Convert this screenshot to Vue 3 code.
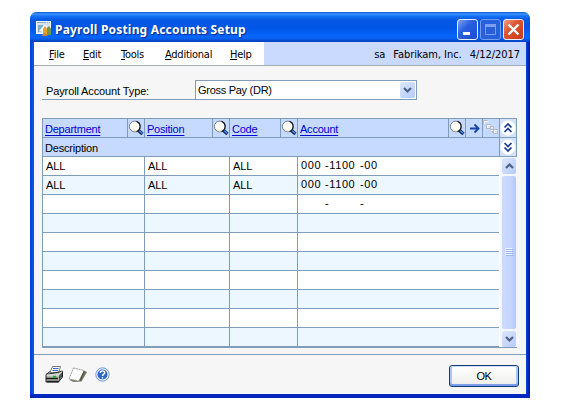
<script setup>
const menus = [
  { name: 'File', width: 34 },
  { name: 'Edit', width: 38 },
  { name: 'Tools', width: 44 },
  { name: 'Additional', width: 65 },
  { name: 'Help', width: 30 },
]
const columns = ['Department', 'Position', 'Code', 'Account']
const rows = [
  ['ALL', 'ALL', 'ALL', ['000', '-1100', '-00']],
  ['ALL', 'ALL', 'ALL', ['000', '-1100', '-00']],
  ['', '', '', ['', '-', '-']],
  ...Array.from({ length: 7 }, () => ['', '', '', []]),
]
</script>

<template>
  <div class="desktop">
    <div class="window">
      <header class="titlebar">
        <svg class="app-icon" width="16" height="16" viewBox="0 0 16 16">
          <rect x=".5" y=".5" width="14" height="12" fill="#d4e4ef" stroke="#f4faff" />
          <path d="M1 1.500h13" stroke="#8fa9bb" stroke-dasharray="9 1 1 1" />
          <path d="M2 4h5v7H2z" fill="#7faec8" />
          <path d="M3 10l5-6 3 1-4 6z" fill="#f6fae9" />
          <path d="M7 14V8l2-3 2 3v6z" fill="#e0a52e" />
          <path d="M11 14V7l2-2 2 3v6z" fill="#6d9653" />
          <path d="M5 15l4-3 3 3z" fill="#bc8542" />
        </svg>
        <h1>Payroll Posting Accounts Setup</h1>
        <div class="controls">
          <button class="ctl min"><svg width="19" height="19"><path d="M5 13.500h7" stroke="#fff" stroke-width="3" /></svg></button>
          <button class="ctl max"><svg width="19" height="19"><path d="M4.500 5v9.500h10V5z" fill="none" stroke="#7c9df0" /><path d="M4 5.500h11" stroke="#7c9df0" stroke-width="3" /></svg></button>
          <button class="ctl close"><svg width="19" height="19"><path d="M4.500 4.500l10 10M14.500 4.500l-10 10" stroke="#fff" stroke-width="2.300" /></svg></button>
        </div>
      </header>

      <nav class="menubar">
        <div class="menus">
          <span v-for="m in menus" :key="m.name" class="menu" :style="{ width: m.width + 'px' }"><u>{{ m.name[0] }}</u>{{ m.name.slice(1) }}</span>
        </div>
        <div class="session">
          <span>sa</span><span class="company">Fabrikam, Inc.</span><span>4/12/2017</span>
        </div>
      </nav>

      <main class="body">
        <div class="field">
          <label>Payroll Account Type:</label>
          <div class="select">
            <span>Gross Pay (DR)</span>
            <i class="drop"><svg width="15" height="16"><path d="M4 6l3.500 3.500L11 6" fill="none" stroke="#4d6185" stroke-width="2.200" /></svg></i>
          </div>
        </div>

        <section class="grid">
          <div class="head">
            <template v-for="c in columns" :key="c">
              <div class="cell link"><a>{{ c }}</a></div>
              <div class="cell icon">
                <svg width="16" height="18" viewBox="0 0 16 18">
                  <path d="M10.500 11.500l4 3.500" stroke="#10285c" stroke-width="3.400" />
                  <path d="M11 11.500l3.500 3" stroke="#4a8de8" stroke-width="1.400" />
                  <circle cx="6.800" cy="7.500" r="5.400" fill="#fffef6" stroke="#767a86" stroke-width="1" />
                  <path d="M8.500 2.400a5.400 5.400 0 0 1 0 10.200" stroke="#14161f" stroke-width="1.200" fill="none" />
                  <path d="M3 9.500a4.500 4.500 0 0 0 6 2" stroke="#e3dcc4" fill="none" />
                </svg>
              </div>
            </template>
            <div class="cell icon"><svg width="16" height="18"><path d="M4 9.500h8M8.500 5.500l4 4-4 4" fill="none" stroke="#1746b0" stroke-width="1.900" /></svg></div>
            <div class="cell icon">
              <svg width="16" height="18" fill="#dfe6f3" stroke="#b3b9c5">
                <path d="M.5 5.500v-4h4M3.500 10V7.500M9.500 14v-3" fill="none" />
                <path d="M3.500 5.500h4v4h-4zM7.500 7.500h3v3h-3zM10.500 10.500h4v4h-4z" />
                <path d="M1.500 5V2.500h4M4.500 9V6.500h3M11.500 13.500v-2h3M8 11.500h2" fill="none" stroke="#fff" />
              </svg>
            </div>
            <div class="cell icon"><svg class="chev" width="16" height="18"><circle cx="8" cy="9" r="7.500" fill="#fff" /><path d="M4.500 8.500L8 5l3.500 3.500M4.500 13L8 9.500l3.500 3.500" fill="none" stroke="#173a92" stroke-width="1.700" /></svg></div>
          </div>
          <div class="subhead">
            <div class="desc">Description</div>
            <div class="cell icon"><svg class="chev" width="16" height="18"><circle cx="8" cy="9" r="7.500" fill="#fff" /><path d="M4.500 5L8 8.500 11.500 5M4.500 9.500L8 13l3.500-3.500" fill="none" stroke="#173a92" stroke-width="1.700" /></svg></div>
          </div>
          <div class="data">
            <div class="rows">
              <div v-for="(r, i) in rows" :key="i" class="row">
                <div class="td">{{ r[0] }}</div>
                <div class="td">{{ r[1] }}</div>
                <div class="td">{{ r[2] }}</div>
                <div class="td account"><span v-for="(s, j) in r[3]" :key="j">{{ s }}</span></div>
              </div>
            </div>
            <div class="scroll">
              <i class="sbtn"><svg width="15" height="16"><path d="M4 10l3.500-3.500L11 10" fill="none" stroke="#4d6185" stroke-width="2.200" /></svg></i>
              <i class="thumb"><svg width="8" height="9"><path d="M0 .5h7M0 2.500h7M0 4.500h7M0 6.500h7" stroke="#eff5ff" /><path d="M1 1.500h7M1 3.500h7M1 5.500h7M1 7.500h7" stroke="#9eb9ef" /></svg></i>
              <i class="sbtn"><svg width="15" height="16"><path d="M4 6l3.500 3.500L11 6" fill="none" stroke="#4d6185" stroke-width="2.200" /></svg></i>
            </div>
          </div>
        </section>
      </main>

      <footer class="footer">
        <div class="tools">
          <svg width="19" height="17" viewBox="0 0 19 17">
            <path d="M5 6.500L7.500.5h8L13.500 7z" fill="#fff" stroke="#555" stroke-width=".8" />
            <path d="M8 2.500h5.500M7.500 4.500h5.500" stroke="#3569c4" stroke-width="1.200" />
            <path d="M1 8.500l4-3M14 6l3.500-1v6l-4 5H1V8.500z" fill="#b4b8b1" stroke="#222" />
            <path d="M1.500 9h12l3.500-3.500" stroke="#f5f5f5" fill="none" />
            <path d="M14 9.500l3-3v4l-3 4z" fill="#4b5150" />
            <path d="M1 12.500h12M2 15.500h12" stroke="#171717" stroke-width="1.500" />
            <path d="M8 10.700h3" stroke="#13b62c" stroke-width="2" />
          </svg>
          <svg width="20" height="16" viewBox="0 0 20 16">
            <path d="M15.500 3.500l3.500 1.500-5.500 9.500-8 .5-4-2z" fill="#77776a" />
            <path d="M5.500 1L16 3.500 11 14 1 12z" fill="#fff" stroke="#929289" stroke-width=".9" stroke-dasharray="2 .7" />
            <path d="M16.500 4.500L12 13.500" stroke="#555548" stroke-width="1.500" />
          </svg>
          <svg class="help" width="15" height="15" viewBox="0 0 15 15">
            <circle cx="7.500" cy="7.500" r="6.700" fill="#eef4ff" stroke="#6c9bdf" />
            <circle cx="7.500" cy="7.500" r="5" fill="#2f67c7" />
            <path d="M5.300 6c0-3 4.500-2.700 4.400-.2C9.600 7.300 7.600 7 7.500 9M7.500 10v1.500" fill="none" stroke="#fff" stroke-width="1.400" />
          </svg>
        </div>
        <button class="ok">OK</button>
      </footer>
    </div>
  </div>
</template>

<style>
body { background: #fff; overflow: hidden; }
</style>

<style scoped>
* { box-sizing: border-box; }
svg { display: block; flex: none; }
button { padding: 0; font: inherit; }
.desktop { width: 565px; height: 415px; padding: 12px 0 0 30px; font: 11px/14px "Liberation Sans", sans-serif; color: #000; }
.window { width: 500px; height: 386px; display: flex; flex-direction: column; background: linear-gradient(90deg, #0831d9 0, #0c4fe5 2px, #0855dd 4px, #0855dd 496px, #0030d8 497px, #00189c 500px); border-bottom: 4px solid #0428bd; border-radius: 7px 7px 0 0; overflow: hidden; }
.titlebar { height: 30px; flex: none; display: flex; align-items: center; padding: 0 6px; background: linear-gradient(#0a58cf 0, #3d95ff 2px, #1572f5 4px, #0558e2 8px, #0055e5 15px, #0663fb 23px, #0664fa 26px, #0453d8 28px, #003cb5 30px); }
.app-icon { margin-top: 3px; }
h1 { margin: 5px 0 0 3px; font: bold 12px/18px "Noto Sans", sans-serif; letter-spacing: .19px; color: #fff; text-shadow: 1px 1px 1px #0b2b8a; white-space: nowrap; }
.controls { display: flex; gap: 2px; margin: 4px 0 0 auto; }
.ctl { width: 21px; height: 21px; border: 1px solid #e9efff; border-radius: 3px; overflow: hidden; }
.min { background: linear-gradient(135deg, #7fa3f5, #2960e0 40%, #1d4bd0); }
.max { background: #2860dc; border-color: #759bf0; }
.close { background: linear-gradient(135deg, #f1a188, #e0522f 40%, #c83b14); }

.menubar { height: 24px; flex: none; margin: 0 4px; display: flex; border-bottom: 1px solid #a5acb5; font: 11px/23px "DejaVu Sans Condensed", sans-serif; }
.menus { width: 230px; background: #fff; display: flex; padding: 1px 0 0 15px; letter-spacing: -.25px; }
.menu { flex: none; white-space: nowrap; }
.session { flex: 1; display: flex; justify-content: flex-end; gap: 8px; padding: 1px 6px 0 0; background: #c9dafe; white-space: pre; letter-spacing: -.05px; }

.body { height: 288px; flex: none; margin: 0 4px; padding: 14px 9px 0 8px; background: #f6f6f6; }
.field { display: flex; height: 20px; width: 375px; }
label { width: 153px; padding: 4px 0 0 4px; border-bottom: 1px solid #7f9db9; letter-spacing: -.12px; }
.select { flex: 1; display: flex; justify-content: space-between; border: 1px solid #7f9db9; background: #fff; padding: 1px 1px 1px 2px; }
.select span { line-height: 16px; letter-spacing: -.28px; }
.drop, .sbtn { width: 15px; height: 16px; display: block; border-radius: 2px; background: linear-gradient(135deg, #dce7ff, #b7cbf7); }

.grid { margin-top: 18px; width: 475px; height: 230px; border: 1px solid #7f9db9; border-bottom-width: 2px; background: #fff; }
.head { display: grid; grid-template-columns: 85px 17px 68px 17px 51px 17px 151px 17px 17px 17px 16px; height: 19px; background: #c6daff; border-bottom: 1px solid #7f9db9; }
.cell { border-right: 1px solid #7f9db9; overflow: hidden; }
.cell:last-child { border-right: 0; }
.link { padding: 3px 0 0 2px; letter-spacing: -.22px; }
.link a { color: #0000d0; text-decoration: underline; text-underline-offset: 2px; text-decoration-skip-ink: none; }
.subhead { height: 19px; display: flex; justify-content: space-between; background: #c6daff; border-bottom: 1px solid #7f9db9; }
.subhead .cell { width: 17px; border-left: 1px solid #7f9db9; }
.chev { background: #d5e2fb; }
.desc { padding: 3px 0 0 2px; letter-spacing: -.2px; }
.data { display: flex; height: 190px; }
.rows { flex: none; width: 456px; }
.row { height: 19px; display: grid; grid-template-columns: 102px 85px 68px 201px; border-bottom: 1px solid #7f9db9; }
.row:nth-child(even) { background: #edf7ff; }
.td { padding: 2px 0 0 3px; border-right: 1px solid #7f9db9; line-height: 15px; letter-spacing: -.1px; }
.td:last-child { border-right: 0; }
.td.account { display: flex; line-height: 13px; letter-spacing: .6px; }
.account span:nth-child(1) { width: 24px; }
.account span:nth-child(2) { width: 35px; }
.scroll { flex: 1; display: flex; flex-direction: column; gap: 2px; align-items: center; padding: 1px 1px 0 2px; background: #f4f7fe; border-left: 1px solid #fff; }
.sbtn { width: 14px; }
.thumb { width: 14px; flex: 1; display: flex; align-items: center; justify-content: center; border-radius: 2px; background: linear-gradient(90deg, #cbdaff, #c6d6fe 60%, #b5c8f6); }

.footer { flex: 1; margin: 0 4px; display: flex; justify-content: space-between; align-items: flex-start; padding: 11px 7px 0 11px; background: #f6f6f6; border-top: 1px solid #7f9db9; }
.tools { display: flex; gap: 4px; align-items: center; }
.help { margin-left: 3px; }
.ok { width: 70px; height: 22px; margin-top: -1px; border: 1px solid #123c75; border-radius: 3px; background: linear-gradient(#fff, #f2f3f0 80%, #e5e7ee); box-shadow: inset 0 1px #cee0ff, inset 0 -2px #7b9fe8, inset 2px 0 #a9c4f5, inset -2px 0 #a9c4f5; line-height: 20px; letter-spacing: -.4px; }
</style>
